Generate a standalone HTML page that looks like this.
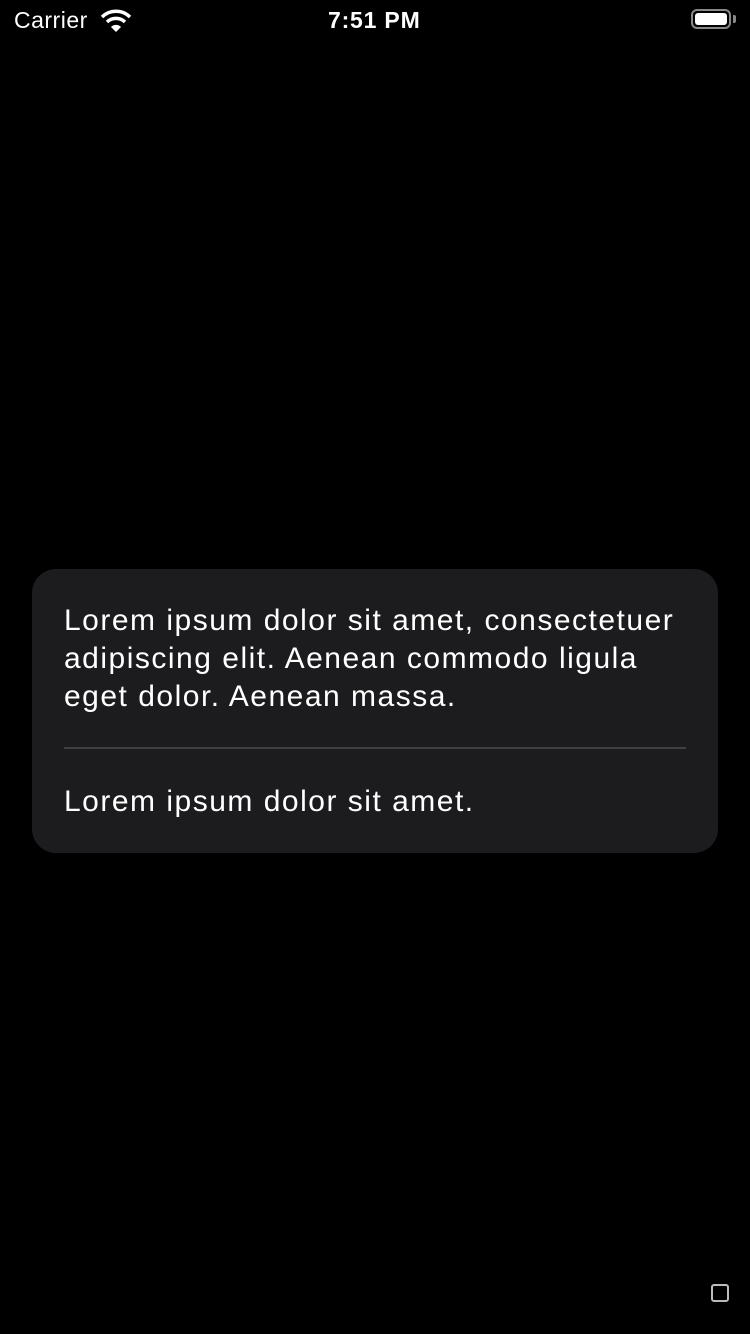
<!DOCTYPE html>
<html><head><meta charset="utf-8"><style>
body{margin:0;width:750px;height:1334px;background:#000;position:relative;overflow:hidden;font-family:"Liberation Sans",sans-serif;color:#fff}
.sb{position:absolute;top:0;left:0;width:750px;height:40px;font-size:23px}
.card{position:absolute;left:32px;top:569px;width:686px;height:284px;background:#1c1c1e;border-radius:24px}
.t{position:absolute;left:32px;font-size:30px;line-height:38px;white-space:nowrap;letter-spacing:1.5px}
.div{position:absolute;left:32px;top:178px;width:622px;height:2px;background:#3f3f43}
</style></head><body>
<div class="sb">
<span style="position:absolute;left:14px;top:7px;letter-spacing:0.5px">Carrier</span>
<svg style="position:absolute;left:100px;top:9px" width="32" height="24" viewBox="0 0 32 24"><path d="M2 8 A20 20 0 0 1 30 8" stroke="#fff" stroke-width="3.5" fill="none"/><path d="M7 13 A13 13 0 0 1 25 13" stroke="#fff" stroke-width="3.5" fill="none"/><path d="M11 18 L16 23 L21 18 A7 7 0 0 0 11 18Z" fill="#fff"/></svg>
<span style="position:absolute;left:328px;top:7px;font-weight:bold;letter-spacing:0.8px">7:51 PM</span>
<div style="position:absolute;left:691px;top:9px;width:40px;height:20px;border:2px solid #888;border-radius:6px;box-sizing:border-box"><div style="position:absolute;left:2px;top:2px;right:2px;bottom:2px;background:#fff;border-radius:3px"></div></div>
<div style="position:absolute;left:733px;top:15px;width:3px;height:8px;background:#888;border-radius:0 2px 2px 0"></div>
</div>
<div class="card">
<div class="t" style="top:33px">Lorem ipsum dolor sit amet, consectetuer<br>adipiscing elit. Aenean commodo ligula<br>eget dolor. Aenean massa.</div>
<div class="div"></div>
<div class="t" style="top:214px">Lorem ipsum dolor sit amet.</div>
</div>
<div style="position:absolute;left:711px;top:1284px;width:18px;height:18px;border:2px solid #bbb;border-radius:3px;box-sizing:border-box"></div>
</body></html>
